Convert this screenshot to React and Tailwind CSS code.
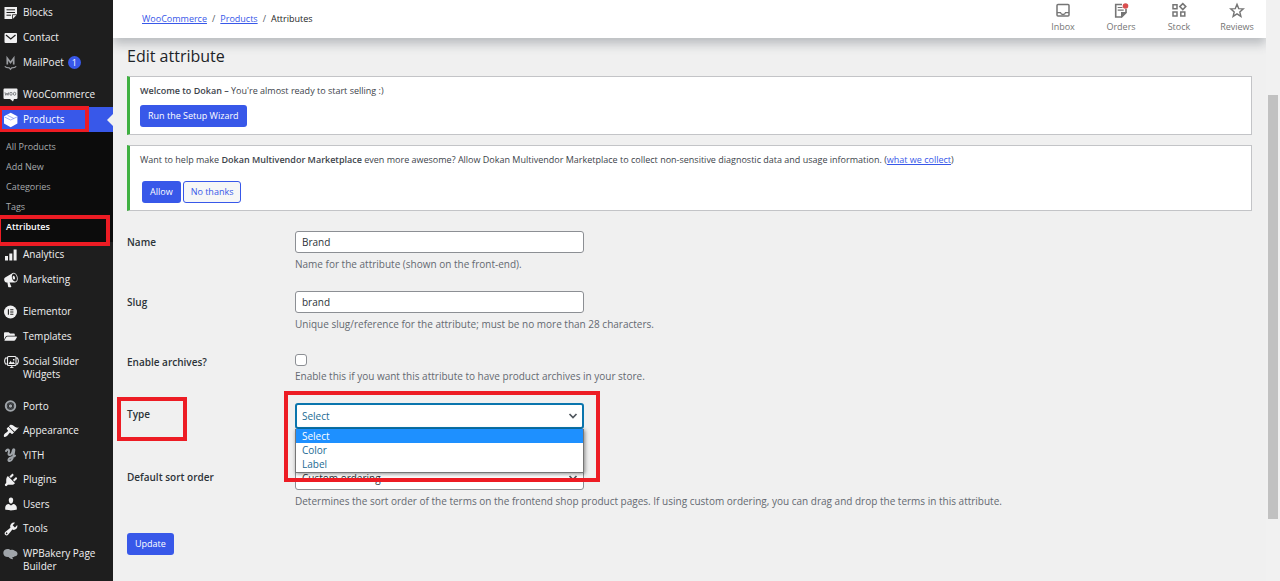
import React from 'react';
import { FaFolderOpen } from 'react-icons/fa';

const Svg = ({ children, box = '0 0 16 16', className = 'size-4' }) => (
  <svg viewBox={box} className={`shrink-0 ${className}`} fill="currentColor" aria-hidden="true">
    {children}
  </svg>
);

const BlocksIcon = () => (
  <Svg>
    <path d="M1.500 2h12.500v7.500L9.700 14H1.500z" />
    <path d="M3.500 4.800h8.500M3.500 7.500h8.500M3.500 10.200h4.500" stroke="#1e1e1e" strokeWidth="1" />
    <path d="M9.500 14V9.700H14" fill="none" stroke="#1e1e1e" strokeWidth=".8" />
  </Svg>
);
const MailIcon = () => (
  <Svg>
    <rect x="1.500" y="3" width="12.500" height="10" rx="1" />
    <path d="M3 5l4.750 4L12.500 5" fill="none" stroke="#1e1e1e" strokeWidth="1.200" />
  </Svg>
);
const MailPoetIcon = () => (
  <Svg className="size-4 text-[#9a9ca0]">
    <path d="M4.300 9.500V3.200L7.500 7.500l3.200-4.300v6.300" fill="none" stroke="currentColor" strokeWidth="1.700" />
    <path d="M1.800 11.300c1 1.300 3 1.500 4.500 1.500l1.200 1.500 1.200-1.500c1.500 0 3.500-.2 4.500-1.500" fill="none" stroke="currentColor" strokeWidth="1.200" />
  </Svg>
);
const WooIcon = () => (
  <Svg>
    <path d="M1.500 1.500h12a1 1 0 0 1 1 1V11a1 1 0 0 1-1 1h-2.500L10 14.500 7 12H1.500a1 1 0 0 1-1-1V2.500a1 1 0 0 1 1-1z" />
    <path d="M2 5.300l.8 3 1.200-2.300 1 2.300.8-3" fill="none" stroke="#55585c" strokeWidth=".7" />
    <ellipse cx="8" cy="6.800" rx="1.200" ry="1.500" fill="none" stroke="#55585c" strokeWidth=".7" />
    <ellipse cx="11.600" cy="6.800" rx="1.200" ry="1.500" fill="none" stroke="#55585c" strokeWidth=".7" />
  </Svg>
);
const BoxIcon = () => (
  <Svg>
    <path d="M7.700.8l6.700 3.400v7.400l-6.700 3.600L1 11.600V4.200z" />
    <path d="M1.500 5l6.200 3 6.200-3M4.500 3.300l6.200 3.100" fill="none" stroke="#3858e9" strokeWidth=".8" opacity=".6" />
  </Svg>
);
const ChartIcon = () => (
  <Svg>
    <path d="M2 9h3v4.500H2zM6.300 6.500h3v7h-3zM10.600 2.500h3v11h-3z" />
  </Svg>
);
const MegaphoneIcon = () => (
  <Svg box="0 0 20 20">
    <path d="M18.150 5.940c.46 1.620.38 3.220-.02 4.480-.42 1.280-1.260 2.180-2.300 2.480-.16.06-.26.06-.4.06-.06.02-.12.02-.18.02-.06.02-.14.02-.22.02h-6.800l2.220 5.500c.02.14-.06.26-.14.34-.08.1-.24.16-.34.16H6.950c-.1 0-.26-.06-.34-.16-.08-.08-.16-.2-.14-.34l-1-5.500H4.250l-.02-.02c-.5.06-1.080-.18-1.540-.62s-.88-1.080-1.060-1.880c-.24-.8-.2-1.560-.02-2.200.18-.62.58-1.080 1.060-1.300l.02-.02 9-5.400c.1-.06.18-.1.24-.16.06-.04.14-.08.24-.12.16-.08.28-.12.5-.18 1.040-.3 2.240.1 3.220.98s1.840 2.240 2.260 3.860zm-2.580 5.980h-.02c.4-.1.74-.34 1.040-.7.58-.7.86-1.760.86-3.040 0-.64-.1-1.300-.28-1.980-.34-1.360-1.020-2.500-1.780-3.240s-1.680-1.100-2.460-.88c-.82.22-1.400.96-1.700 2-.32 1.040-.28 2.360.06 3.720.38 1.360 1 2.500 1.800 3.240.78.74 1.620 1.100 2.480.88zm-2.540-7.080c.22-.04.42-.02.62.04.38.16.76.48 1.020 1s.42 1.200.42 1.780c0 .3-.04.56-.12.8-.18.48-.44.84-.86.94-.34.1-.8-.06-1.140-.4s-.64-.86-.78-1.500c-.18-.62-.12-1.240.02-1.720s.48-.84.82-.94z" />
  </Svg>
);
const ElementorIcon = () => (
  <Svg>
    <circle cx="7.500" cy="8" r="6.500" />
    <path d="M5.400 5.200v5.600M7.200 5.800h3.200M7.200 8h3.200M7.200 10.200h3.200" stroke="#1e1e1e" strokeWidth="1.100" />
  </Svg>
);
const FolderIcon = () => <FaFolderOpen className="ml-px mr-[2px] size-[13px] shrink-0" aria-hidden="true" />;
const SliderIcon = () => (
  <Svg>
    <g fill="none" stroke="currentColor" strokeWidth="1.100">
      <rect x="4.500" y="1.500" width="8.500" height="9" rx="1" />
      <path d="M4.500 3H2.500L1.700 5v2l.8 2h2M13 3h1.500l.8 2v2l-.8 2H13M8.800 11v2" />
    </g>
    <path d="M5.500 9l2-3 1.500 1.700 1.300-1.200L12 9zM10 4h1.500v1.500H10z" />
    <path d="M7 12h3.500v.8H7z" />
  </Svg>
);
const PortoIcon = () => (
  <Svg className="size-4 text-[#a0a5aa]">
    <circle cx="7.500" cy="8" r="4.700" fill="none" stroke="currentColor" strokeWidth="2" />
    <circle cx="7.500" cy="8" r="1.700" />
    <circle cx="7.500" cy="8" r="3" fill="none" stroke="#50555a" strokeWidth="1" />
  </Svg>
);
const BrushIcon = () => (
  <Svg box="0 0 20 20">
    <path d="M14.480 11.060L7.410 3.990l1.500-1.500c.5-.56 2.300-.47 3.510.32 1.210.8 1.430 1.280 2.910 2.100 1.180.64 2.450 1.260 4.450.85zm-.71.71L6.700 4.700 4.930 6.470c-.39.39-.39 1.020 0 1.410l1.060 1.060c.39.39.39 1.030 0 1.420-.6.6-1.430 1.110-2.210 1.690-.35.26-.7.53-1.010.84C1.430 14.230.4 16.080 1.400 17.070c.99 1 2.840-.03 4.180-1.360.31-.31.58-.66.85-1.020.57-.78 1.080-1.610 1.690-2.210.39-.39 1.020-.39 1.410 0l1.060 1.060c.39.39 1.020.39 1.410 0z" />
  </Svg>
);
const YithIcon = () => (
  <Svg className="size-4 text-[#a0a5aa]">
    <path
      d="M3 4c1-1.700 3-2 3 0 0 1.700-1.300 3.600.3 4 1.700.3 3-1.800 3.600-4.800.3-1.200 1.500-1.200 1.400 0C10.800 8 10 14 6.800 14c-2 0-1.700-2 .2-3 1.700-.8 3.500-1 5-2.300"
      fill="none" stroke="currentColor" strokeWidth="2" strokeLinecap="round"
    />
  </Svg>
);
const PlugIcon = () => (
  <Svg box="0 0 20 20">
    <path d="M13.110 4.360L9.870 7.600 8 5.730l3.240-3.240c.35-.34 1.050-.2 1.560.32.52.51.66 1.210.31 1.550zm-8 1.770l.91-1.120 9.010 9.010-1.190.84c-.71.71-2.630 1.160-3.820 1.160H6.140L4.900 17.260c-.59.59-1.540.59-2.120 0-.59-.58-.59-1.530 0-2.120l1.240-1.240v-3.880c0-1.130.4-3.190 1.090-3.890zm7.260 3.970l3.240-3.240c.34-.35 1.040-.21 1.550.31.52.51.66 1.210.31 1.550l-3.240 3.250z" />
  </Svg>
);
const UserIcon = () => (
  <Svg box="0 0 20 20">
    <path d="M10 9.250c-2.270 0-2.730-3.440-2.730-3.440C7 4.020 7.820 2 9.970 2c2.160 0 2.980 2.020 2.710 3.810 0 0-.41 3.440-2.680 3.440zm0 2.570L12.720 10c2.390 0 4.520 2.330 4.520 4.530v2.490s-3.650 1.130-7.240 1.130c-3.650 0-7.240-1.130-7.240-1.130v-2.490c0-2.250 1.940-4.480 4.470-4.480z" />
  </Svg>
);
const WrenchIcon = () => (
  <Svg box="0 0 20 20">
    <path d="M16.680 9.770c-1.340 1.340-3.300 1.670-4.950.99l-5.410 6.520c-.99.99-2.590.99-3.580 0s-.99-2.590 0-3.570l6.520-5.420c-.68-1.650-.35-3.610.99-4.950 1.280-1.280 3.120-1.620 4.720-1.060l-2.890 2.890 2.820 2.820 2.860-2.870c.53 1.580.18 3.390-1.080 4.650zM3.810 16.210c.4.39 1.040.39 1.430 0 .4-.4.4-1.040 0-1.430-.39-.4-1.030-.4-1.430 0-.39.39-.39 1.030 0 1.430z" />
  </Svg>
);
const BakeryIcon = () => (
  <Svg className="size-4 text-[#a0a5aa]">
    <path d="M.3 6c0-2.500 2-4 4.300-4 1.200 0 2 .4 2.700 1 .8-.3 1.600-.4 2.500-.3 1 .2 1.700.6 2.200 1.200 1.500.2 2.500 1.300 2.500 2.900S13.300 9.500 11.800 9.300c-.8.800-1.800.9-2.600.8l.9 2.100c-2.300-.2-3.700-1.200-4.600-2.200C2.300 10.200.3 8.500.3 6z" />
  </Svg>
);

const InboxIcon = () => (
  <Svg>
    <g fill="none" stroke="currentColor" strokeWidth="1.500">
      <rect x="2" y="2.500" width="12" height="11.500" rx="1" />
      <path d="M2 10.700h3.500c.3 1.200 1.200 1.800 2.500 1.800s2.200-.6 2.500-1.800H14" strokeWidth="1.300" />
    </g>
  </Svg>
);
const OrdersIcon = () => (
  <Svg>
    <path d="M9 2.500H2.700V15h5.800l4.500-4.500V7" fill="none" stroke="currentColor" strokeWidth="1.600" />
    <path d="M4.700 5.500h4.800M4.700 8.200h6" stroke="currentColor" strokeWidth="1.200" />
    <path d="M8 15.500V10h5.500v1l-4.500 4.500z" />
    <circle cx="12.500" cy="4" r="2.800" fill="#d94f4f" />
  </Svg>
);
const StockIcon = () => (
  <Svg>
    <g fill="none" stroke="currentColor" strokeWidth="1.500">
      <path d="M2 2.700h4v4H2zM2 10h4v4H2zM9.800 10h4v4h-4zM11.800 1.600l3 3-3 3-3-3z" />
    </g>
  </Svg>
);
const StarIcon = () => (
  <Svg>
    <path d="M8 2.300l1.700 4.300 4.600.3-3.500 3 1.100 4.500L8 11.900l-3.900 2.500 1.100-4.500-3.500-3 4.600-.3z" fill="none" stroke="currentColor" strokeWidth="1.400" />
  </Svg>
);
const ChevronDown = () => (
  <svg viewBox="0 0 10 6" className="pointer-events-none absolute right-[6px] top-1/2 h-[6px] w-[10px] -translate-y-1/2" aria-hidden="true">
    <path d="M1.500 1L5 4.500 8.500 1" fill="none" stroke="#50575e" strokeWidth="1.700" />
  </svg>
);

function MenuItem({ icon: Icon, label, badge, height = 'h-[25px]' }) {
  return (
    <a href="#" className={`flex items-center gap-1 pl-[3px] ${height}`}>
      <Icon />
      <span>{label}</span>
      {badge && (
        <span className="flex size-[13px] items-center justify-center rounded-full bg-[#3858e9] text-[9px] text-white">{badge}</span>
      )}
    </a>
  );
}

function TallMenuItem({ icon: Icon, label }) {
  return (
    <a href="#" className="flex gap-1 py-[6px] pl-[3px] pr-2 leading-[13px]">
      <Icon />
      <span>{label}</span>
    </a>
  );
}

function Sidebar() {
  return (
    <nav aria-label="Admin menu" className="flex w-[113px] shrink-0 flex-col bg-[#1e1e1e] text-[10px] font-medium leading-[13px] text-[#f0f0f1]">
      <MenuItem icon={BlocksIcon} label="Blocks" />
      <MenuItem icon={MailIcon} label="Contact" />
      <MenuItem icon={MailPoetIcon} label="MailPoet" badge="1" />
      <div className="mt-[7px]">
        <MenuItem icon={WooIcon} label="WooCommerce" />
      </div>
      <div className="relative bg-[#3858e9] text-white">
        <MenuItem icon={BoxIcon} label="Products" />
        <div className="absolute right-0 top-1/2 -translate-y-1/2 border-y-[6px] border-r-[6px] border-y-transparent border-r-[#f0f0f0]" />
        <div className="absolute -left-[2px] -top-px h-[27px] w-[91px] border-4 border-[#ed1c24]" />
      </div>
      <div className="relative bg-[#0c0c0c] pb-[6px] pl-[6px] pt-1 text-[9px] font-normal text-[#a7aaad]">
        {['All Products', 'Add New', 'Categories', 'Tags'].map((t) => (
          <a key={t} href="#" className="flex h-5 items-center">{t}</a>
        ))}
        <a href="#" aria-current="page" className="flex h-5 items-center font-semibold text-white">Attributes</a>
        <div className="absolute -bottom-1 -left-[3px] z-10 h-[31px] w-[113px] border-4 border-[#ed1c24]" />
      </div>
      <MenuItem icon={ChartIcon} label="Analytics" />
      <MenuItem icon={MegaphoneIcon} label="Marketing" />
      <div className="mt-[7px]">
        <MenuItem icon={ElementorIcon} label="Elementor" />
        <MenuItem icon={FolderIcon} label="Templates" />
        <TallMenuItem icon={SliderIcon} label="Social Slider Widgets" />
      </div>
      <div className="mt-[7px] grid h-[147px] auto-rows-fr">
        <MenuItem icon={PortoIcon} label="Porto" height="h-full" />
        <MenuItem icon={BrushIcon} label="Appearance" height="h-full" />
        <MenuItem icon={YithIcon} label="YITH" height="h-full" />
        <MenuItem icon={PlugIcon} label="Plugins" height="h-full" />
        <MenuItem icon={UserIcon} label="Users" height="h-full" />
        <MenuItem icon={WrenchIcon} label="Tools" height="h-full" />
      </div>
      <TallMenuItem icon={BakeryIcon} label="WPBakery Page Builder" />
    </nav>
  );
}

function Header() {
  const tabs = [
    [InboxIcon, 'Inbox'],
    [OrdersIcon, 'Orders'],
    [StockIcon, 'Stock'],
    [StarIcon, 'Reviews'],
  ];
  return (
    <header className="flex h-[38px] items-center justify-between bg-white pl-[29px] shadow-[0_6px_10px_rgba(60,70,80,0.3)]">
      <nav aria-label="Breadcrumb" className="flex gap-[5px] text-[9px] text-[#50575e]">
        <a href="#" className="text-[#3858e9] underline">WooCommerce</a>
        <span>/</span>
        <a href="#" className="text-[#3858e9] underline">Products</a>
        <span>/</span>
        <span className="text-[#1e1e1e]">Attributes</span>
      </nav>
      <div className="flex text-[9px] leading-3 text-[#757575]">
        {tabs.map(([Icon, label]) => (
          <button key={label} type="button" className="flex w-[58px] flex-col items-center gap-[3px] pb-1">
            <Icon />
            {label}
          </button>
        ))}
      </div>
    </header>
  );
}

const fieldBox = 'block w-full rounded-[3px] border border-[#8c8f94] bg-white pl-[6px] text-[#2c3338] outline-none';
const primary = 'h-[22px] rounded-[3px] bg-[#3858e9] px-2 text-[9px] font-medium text-white';

function Row({ id, label, hint, tall, marked, children }) {
  return (
    <div className={`relative grid grid-cols-[168px_1fr] py-[10px] ${tall ? 'min-h-[63px]' : ''}`}>
      <label htmlFor={id} className="self-start pt-1 font-semibold text-[#2c3338]">{label}</label>
      <div>
        {children}
        {hint && <p className="text-[#646970]">{hint}</p>}
      </div>
      {marked && <div className="absolute -left-[10px] top-1 h-[44px] w-[70px] border-4 border-[#ed1c24]" />}
    </div>
  );
}

export default function App() {
  return (
    <div className="flex h-screen overflow-hidden bg-[#f0f0f0] font-['Open_Sans','Noto_Sans',sans-serif] text-[10px] leading-[14px] text-[#3c434a]">
      <Sidebar />
      <div className="min-w-0 flex-1 overflow-hidden">
        <Header />
        <main className="px-[14px] pt-[6px]">
          <h1 className="text-[16px] leading-6 text-[#1d2327]">Edit attribute</h1>

          <section className="mt-2 flex h-[59px] flex-col items-start gap-[7px] border border-l-[3px] border-[#c3c4c7] border-l-[#3fb041] bg-white pl-[10px] pt-[7px] text-[9px]">
            <p><strong className="font-semibold">Welcome to Dokan –</strong> You're almost ready to start selling :)</p>
            <button type="button" className={primary}>Run the Setup Wizard</button>
          </section>

          <section className="mt-[10px] h-[66px] border border-l-[3px] border-[#c3c4c7] border-l-[#3fb041] bg-white pl-[10px] pt-[7px] text-[9px]">
            <p>
              Want to help make <strong className="font-semibold">Dokan Multivendor Marketplace</strong> even more awesome? Allow Dokan Multivendor Marketplace to collect non-sensitive diagnostic data and usage information. (<a href="#" className="text-[#3858e9] underline">what we collect</a>)
            </p>
            <div className="mt-[14px] flex gap-[2px] pl-[2px]">
              <button type="button" className={primary}>Allow</button>
              <button type="button" className="h-[22px] rounded-[3px] border border-[#3858e9] bg-[#f6f7f7] px-[7px] text-[#3858e9]">No thanks</button>
            </div>
          </section>

          <form className="mt-[10px]" onSubmit={(e) => e.preventDefault()}>
            <Row id="name" label="Name" hint="Name for the attribute (shown on the front-end).">
              <input id="name" type="text" defaultValue="Brand" className={`${fieldBox} mb-1 h-[22px] max-w-[289px]`} />
            </Row>
            <Row id="slug" label="Slug" hint="Unique slug/reference for the attribute; must be no more than 28 characters.">
              <input id="slug" type="text" defaultValue="brand" className={`${fieldBox} mb-1 h-[22px] max-w-[289px]`} />
            </Row>
            <Row id="archives" label="Enable archives?" hint="Enable this if you want this attribute to have product archives in your store.">
              <div className="flex h-[18px] items-center">
                <input id="archives" type="checkbox" className="size-[12px] appearance-none rounded-[3px] border border-[#8c8f94] bg-white" />
              </div>
            </Row>
            <Row id="type" label="Type" tall marked>
              <div className="relative z-20 max-w-[289px]">
                <select id="type" defaultValue="Select" className="block h-[26px] w-full appearance-none rounded-[3px] border-2 border-[#0a75ad] bg-white pl-[5px] text-[#1b6a93] outline-none">
                  <option>Select</option>
                  <option>Color</option>
                  <option>Label</option>
                </select>
                <ChevronDown />
                <div className="pointer-events-none absolute -left-[11px] -top-3 h-[91px] w-[316px] border-4 border-[#ed1c24]" />
                <ul role="listbox" aria-label="Type options" className="absolute inset-x-0 top-full border border-t-0 border-[#767676] bg-white pb-px text-[#1b6a93] shadow-[1px_1px_4px_rgba(0,0,0,0.45)]">
                  <li role="option" aria-selected="true" className="bg-[#1e90ff] pl-[6px] text-white">Select</li>
                  <li role="option" aria-selected="false" className="pl-[6px]">Color</li>
                  <li role="option" aria-selected="false" className="pl-[6px]">Label</li>
                </ul>
              </div>
            </Row>
            <Row
              id="order"
              label="Default sort order"
              hint="Determines the sort order of the terms on the frontend shop product pages. If using custom ordering, you can drag and drop the terms in this attribute."
            >
              <div className="relative mb-1 max-w-[289px]">
                <select id="order" className={`${fieldBox} h-6 appearance-none`}>
                  <option>Custom ordering</option>
                </select>
                <ChevronDown />
              </div>
            </Row>
            <button type="submit" className={`${primary} mt-[15px]`}>Update</button>
          </form>
        </main>
      </div>
      <div className="flex w-[14px] shrink-0 flex-col bg-[#f1f1f1] px-[2px] pt-[95px]">
        <div className="h-[424px] bg-[#c1c1c1]" />
      </div>
    </div>
  );
}
